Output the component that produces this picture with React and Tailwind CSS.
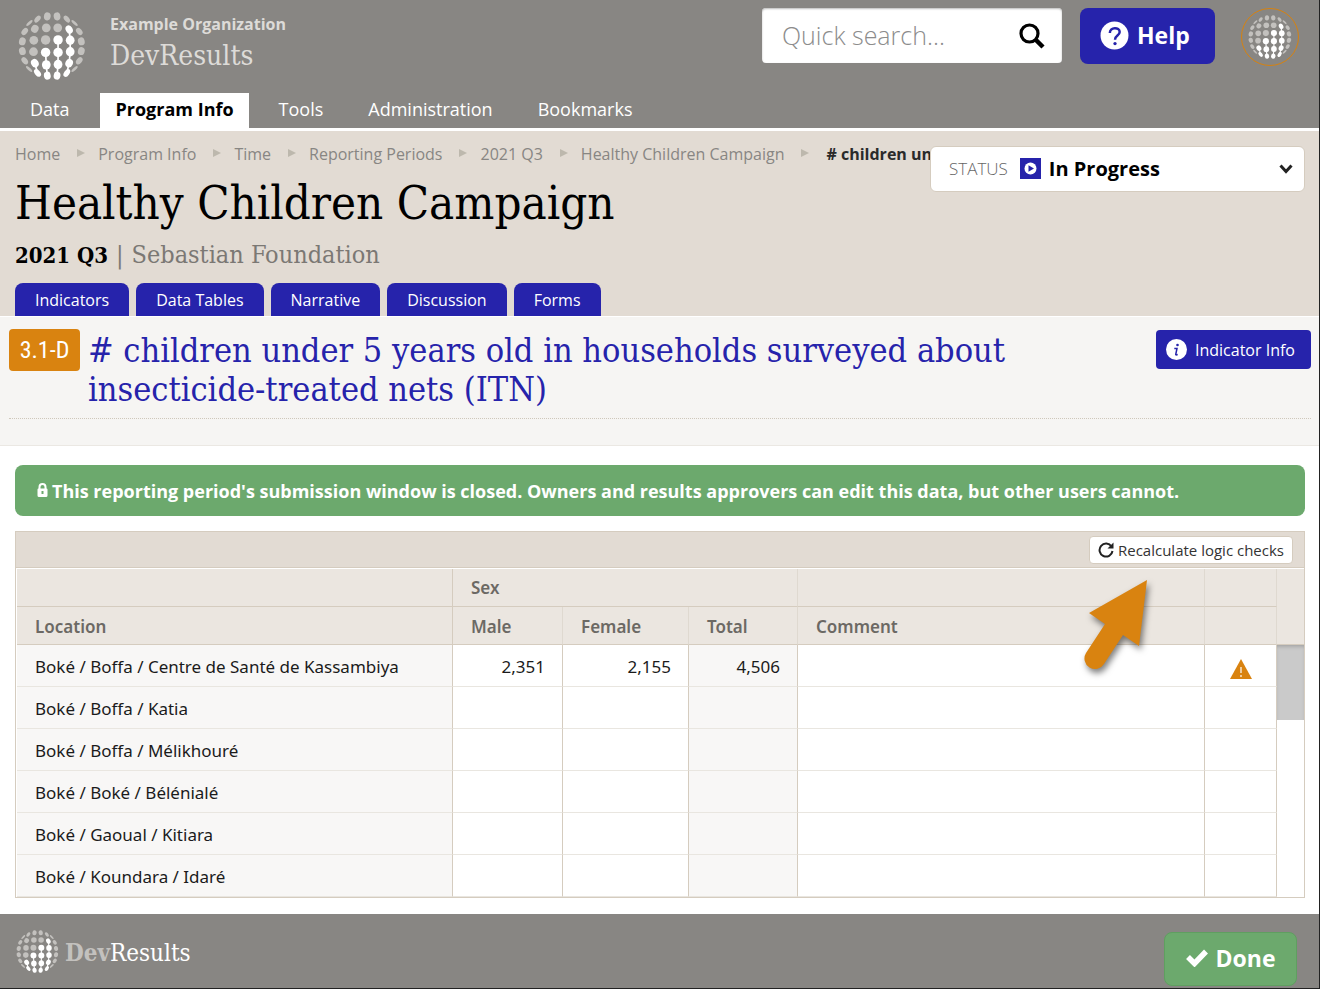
import React from "react";

// x, y, rx, ry, rotation, lit
const DOTS = [
  [141, 51, 10, 12, 8, 0], [170, 51, 10, 12, -8, 0], [112, 59, 7, 12, 40, 0], [199, 59, 7, 12, -40, 0],
  [88, 71, 4, 12, 47, 0], [222, 71, 4, 12, -47, 0],
  [74, 96, 8, 12, 40, 0], [104, 88, 11, 12, 30, 0], [138, 85, 13, 13, 0, 0], [172, 85, 13, 13, 0, 0],
  [206, 90, 10, 13, -30, 1], [236, 96, 8, 12, -40, 0],
  [67, 125, 10, 12, 15, 0], [101, 122, 13, 13, 0, 0], [136, 121, 14, 14, 0, 0], [173, 121, 14, 14, 0, 1],
  [209, 122, 13, 14, 0, 1], [242, 125, 10, 12, -15, 0],
  [67, 154, 10, 12, -15, 0], [100, 156, 13, 13, 0, 0], [136, 158, 14, 14, 0, 1], [173, 158, 14, 14, 0, 1],
  [209, 156, 13, 14, 0, 1], [242, 154, 10, 12, 15, 0],
  [74, 183, 8, 12, -40, 0], [104, 190, 11, 13, -30, 1], [138, 195, 13, 14, 0, 1], [173, 194, 13, 14, 0, 1],
  [206, 190, 11, 13, 25, 1], [236, 183, 8, 12, 40, 0],
  [87, 207, 4, 12, -47, 0], [112, 219, 8, 13, -40, 1], [141, 227, 10, 12, -10, 1], [170, 227, 10, 12, 10, 1],
  [199, 219, 8, 13, 35, 1], [222, 207, 4, 12, 47, 0],
];

function Globe({ className }) {
  return (
    <svg viewBox="54 38 202 202" className={className} aria-hidden="true">
      <path
        d="M206 90L209 122V156L206 190L199 219M173 121V194L170 227M136 158L138 195L141 227M104 190L112 219"
        fill="none"
        stroke="#fff"
        strokeWidth="5"
      />
      {DOTS.map(([x, y, rx, ry, r, lit]) => (
        <ellipse key={`${x}-${y}`} cx={x} cy={y} rx={rx} ry={ry} transform={`rotate(${r} ${x} ${y})`} fill={lit ? "#fff" : "#c3c1be"} />
      ))}
    </svg>
  );
}

const SLAB = "font-['Roboto_Slab','DejaVu_Serif_Condensed','DejaVu_Serif',serif]";
const NAV = ["Data", "Program Info", "Tools", "Administration", "Bookmarks"];
const CRUMBS = ["Home", "Program Info", "Time", "Reporting Periods", "2021 Q3", "Healthy Children Campaign"];
const TABS = ["Indicators", "Data Tables", "Narrative", "Discussion", "Forms"];
const ROWS = [
  { location: "Boké / Boffa / Centre de Santé de Kassambiya", male: "2,351", female: "2,155", total: "4,506", warn: true },
  { location: "Boké / Boffa / Katia" },
  { location: "Boké / Boffa / Mélikhouré" },
  { location: "Boké / Boké / Bélénialé" },
  { location: "Boké / Gaoual / Kitiara" },
  { location: "Boké / Koundara / Idaré" },
];

function Header() {
  return (
    <header className="border-b-3 border-white bg-[#888683]">
      <div className="flex h-[93px] items-start justify-between pt-2 pr-5 pl-[18px]">
        <div className="flex gap-6 pt-1">
          <Globe className="size-[68px]" />
          <div>
            <p className="text-base leading-6 font-bold text-[#dddbd8]">Example Organization</p>
            <p className={`${SLAB} text-[28px] leading-10 font-light text-[#dddbd8]`}>DevResults</p>
          </div>
        </div>
        <div className="flex items-start">
          <form className="flex h-[55px] w-[300px] items-center rounded bg-white pr-4 pl-5 shadow-[inset_0_1px_2px_#bbb]">
            <input aria-label="Quick search" placeholder="Quick search..." className="min-w-0 flex-1 text-[25px] font-light outline-none placeholder:text-[#8c8c8c]" />
            <button type="button" aria-label="Search">
              <svg viewBox="0 0 28 28" className="size-7" fill="none" stroke="#000">
                <circle cx="11.500" cy="11.500" r="8.500" strokeWidth="3.200" />
                <path d="M18 18l7 7" strokeWidth="4.500" />
              </svg>
            </button>
          </form>
          <button className="ml-[18px] flex h-14 w-[135px] items-center gap-2 rounded-lg bg-[#2623ab] px-5 pb-px text-[23px] font-bold text-white">
            <svg viewBox="0 0 28 28" className="size-[29px]" fill="none">
              <circle cx="14" cy="14" r="13.500" fill="#fff" />
              <path d="M9.500 11.500c0-6 9.500-6 9.500-.8 0 3.500-4.500 3.300-4.500 7.300" stroke="#2623ab" strokeWidth="2.400" />
              <circle cx="14.500" cy="21.800" r="1.600" fill="#2623ab" />
            </svg>
            Help
          </button>
          <button aria-label="Account" className="ml-[26px] flex size-[58px] items-center justify-center rounded-full border border-[#d7820f]">
            <Globe className="size-11" />
          </button>
        </div>
      </div>
      <nav className="flex h-[35px] pl-[15px] text-lg text-white">
        {NAV.map((n, i) => (
          <a
            key={n}
            href="#"
            className={
              i === 1
                ? "mr-[15px] ml-4 flex items-center bg-white px-[15px] pb-1 font-bold text-black"
                : "flex items-center px-[15px] pb-1 not-first:mr-[15px]"
            }
          >
            {n}
          </a>
        ))}
      </nav>
    </header>
  );
}

function TitleArea() {
  return (
    <section className="border-b border-white bg-[#e2dbd3] pr-[14px] pl-[15px]">
      <div className="flex items-start">
        <div className="min-w-0 flex-1 overflow-hidden pt-[11px]">
          <nav aria-label="Breadcrumb" className="flex items-center text-base leading-6 whitespace-nowrap text-[#888683]">
            {CRUMBS.map((c) => (
              <React.Fragment key={c}>
                <a href="#">{c}</a>
                <svg viewBox="0 0 38 12" className="h-3 w-[38px] shrink-0" fill="#bdb8ad">
                  <path d="M17 1l8 4-8 4z" />
                </svg>
              </React.Fragment>
            ))}
            <span className="pl-1 font-bold text-[#2a2a2a]"># children under</span>
          </nav>
          <h1 className={`${SLAB} pt-0.5 text-[47px] leading-[70px] whitespace-nowrap text-black`}>Healthy Children Campaign</h1>
        </div>
        <label className="mt-[15px] flex h-[46px] w-[375px] items-center rounded-md border border-[#d5ccbf] bg-white pr-[11px] pb-px pl-[18px] text-[17px] font-light text-[#666]">
          STATUS
          <svg viewBox="0 0 21 21" className="mr-2 ml-3 size-[21px]">
            <path d="M0 0h21v21H0z" fill="#2623ab" />
            <circle cx="10.500" cy="10.500" r="6" fill="#fff" />
            <path d="M8.500 7.200l5.500 3.300-5.500 3.300z" fill="#2623ab" />
          </svg>
          <select className="min-w-0 flex-1 appearance-none bg-transparent text-xl font-bold text-black">
            <option>In Progress</option>
          </select>
          <svg viewBox="0 0 14 14" className="size-[14px]" fill="none" stroke="#222" strokeWidth="3">
            <path d="M1.500 3.500l5.500 6 5.500-6" />
          </svg>
        </label>
      </div>
      <p className={`${SLAB} flex items-baseline gap-2 pt-px text-[25px] leading-8 text-[#7b7874]`}>
        <strong className="text-[22px] font-bold text-black">2021 Q3</strong>
        <span>|</span>
        <span>Sebastian Foundation</span>
      </p>
      <nav className="mt-3 flex gap-[7px] text-base text-white">
        {TABS.map((t) => (
          <a key={t} href="#" className="flex h-[33px] items-center rounded-t-lg bg-[#2623ab] px-5">
            {t}
          </a>
        ))}
      </nav>
    </section>
  );
}

function IndicatorArea() {
  return (
    <section className="border-b border-[#ebe8e3] bg-[#f6f5f3] pt-3 pr-2 pb-[26px] pl-[9px]">
      <div className="flex items-start justify-between border-b border-dotted border-[#cfc8bb] pb-[9px]">
        <div className="flex gap-2">
          <span className="flex h-[42px] w-[71px] shrink-0 items-center justify-center rounded bg-[#d98310] font-['Roboto_Condensed','Liberation_Sans_Narrow','Liberation_Sans',sans-serif] text-2xl text-white">
            3.1-D
          </span>
          <h2 className={`${SLAB} max-w-[960px] pt-0.5 text-[34px] leading-[39px] text-[#2623ab]`}>
            # children under 5 years old in households surveyed about insecticide-treated nets (ITN)
          </h2>
        </div>
        <button className="mt-px flex h-[39px] w-[155px] shrink-0 items-center gap-2 rounded bg-[#2623ab] px-[10px] text-base whitespace-nowrap text-white">
          <svg viewBox="0 0 21 21" className="size-[21px]">
            <circle cx="10.500" cy="10.500" r="10.500" fill="#fff" />
            <circle cx="11.500" cy="6" r="1.300" fill="#2623ab" />
            <path d="M8.300 9.500h2.700l-1.300 6q0 .8 2 0" fill="none" stroke="#2623ab" strokeWidth="1.500" />
          </svg>
          Indicator Info
        </button>
      </div>
    </section>
  );
}

const TH = "border-b border-[#d5ccbf] pl-[18px] text-left font-semibold";
const TD = "h-[42px] border-r border-b border-r-[#d5ccbf] border-b-[#e9e6e0]";

function DataTable() {
  return (
    <div className="relative mt-[15px] border border-[#d5ccbf]">
      <div className="flex h-9 items-center justify-end border-b border-[#d5ccbf] bg-[#e2dbd3] pt-px pr-[11px]">
        <button className="flex h-7 items-center gap-1 rounded border border-[#d5ccbf] bg-white px-2 text-[15px] text-[#333]">
          <svg viewBox="0 0 16 16" className="size-4" fill="none" stroke="#222" strokeWidth="2">
            <path d="M13.500 4.500A6.500 6.500 0 1 0 14.500 9" />
            <path d="M15.500.5v6h-6z" fill="#222" stroke="none" />
          </svg>
          Recalculate logic checks
        </button>
      </div>
      <div className="flex bg-white pt-px pl-px">
        <table className="min-w-0 flex-1 table-fixed border-separate border-spacing-0 font-['Segoe_UI','Noto_Sans','Open_Sans',sans-serif] text-[17px]">
          <colgroup>
            <col className="w-[436px]" />
            <col className="w-[110px]" />
            <col className="w-[126px]" />
            <col className="w-[109px]" />
            <col />
            <col className="w-[72px]" />
          </colgroup>
          <thead className="bg-[#ebe6e0] text-[#6c6964]">
            <tr className="h-[38px]">
              <th className={`${TH} border-r`} />
              <th colSpan={3} className={`${TH} border-r border-r-[#dfd9d0]`}>Sex</th>
              <th className={`${TH} border-r border-r-[#dfd9d0]`} />
              <th className={`${TH} border-r border-r-[#dfd9d0]`} />
            </tr>
            <tr className="h-[38px]">
              <th className={`${TH} border-r pt-0.5`}>Location</th>
              <th className={`${TH} border-r border-r-[#dfd9d0] pt-0.5`}>Male</th>
              <th className={`${TH} border-r border-r-[#dfd9d0] pt-0.5`}>Female</th>
              <th className={`${TH} border-r border-r-[#dfd9d0] pt-0.5`}>Total</th>
              <th className={`${TH} border-r border-r-[#dfd9d0] pt-0.5`}>Comment</th>
              <th className={`${TH} border-r border-r-[#dfd9d0]`} />
            </tr>
          </thead>
          <tbody className="text-[#1b1b1b]">
            {ROWS.map((r) => (
              <tr key={r.location}>
                <td className={`${TD} bg-[#f8f7f6] pt-0.5 pl-[18px] whitespace-nowrap`}>{r.location}</td>
                <td className={`${TD} pt-0.5 pr-[17px] text-right`}>{r.male}</td>
                <td className={`${TD} pt-0.5 pr-[17px] text-right`}>{r.female}</td>
                <td className={`${TD} bg-[#f8f7f6] pt-0.5 pr-[17px] text-right`}>{r.total}</td>
                <td className={TD} />
                <td className={`${TD} pt-[6px]`}>
                  {r.warn && (
                    <svg viewBox="0 0 22 20" className="mx-auto h-5 w-[22px]" role="img" aria-label="Warning">
                      <path d="M11 0l11 20H0z" fill="#d98310" />
                      <path d="M11 8v6m0 2v2" stroke="#fff" strokeWidth="1.200" />
                    </svg>
                  )}
                </td>
              </tr>
            ))}
          </tbody>
        </table>
        <div className="w-[27px] shrink-0">
          <div className="h-[76px] border-b border-[#d5ccbf] bg-[#ebe6e0]" />
          <div className="h-[75px] bg-[#cacaca] shadow-[inset_0_3px_4px_-2px_#999]" />
        </div>
      </div>
      <svg viewBox="0 0 80 110" className="absolute top-[42px] right-[148px] h-[110px] w-20 drop-shadow-[2px_4px_3px_rgba(0,0,0,0.5)]">
        <path d="M71 6L13 39l16 11-19 29a10 10 0 0 0 18 11l19-29 16 11z" fill="#d98310" />
      </svg>
    </div>
  );
}

export default function App() {
  return (
    <div className="flex min-h-screen flex-col border-r border-b border-[#222] bg-white font-['Open_Sans',sans-serif]">
      <Header />
      <TitleArea />
      <IndicatorArea />
      <main className="flex-1 pt-[19px] pr-[14px] pb-4 pl-[15px]">
        <div className="flex h-[51px] items-center gap-1 rounded-lg bg-[#6ca96d] px-[22px] text-lg font-bold text-white">
          <svg viewBox="0 0 11 15" className="h-[15px] w-[11px]">
            <path d="M2.500 6V4a3 3 0 0 1 6 0v2" fill="none" stroke="#fff" strokeWidth="2" />
            <path fillRule="evenodd" d="M1.500 5.500h8q1 0 1 1v6q0 1.500-1.500 1.500H2Q.5 14 .5 12.500v-6q0-1 1-1zM4.500 8v3h2V8z" fill="#fff" />
          </svg>
          This reporting period's submission window is closed. Owners and results approvers can edit this data, but other users cannot.
        </div>
        <DataTable />
      </main>
      <footer className="flex h-[74px] items-start justify-between bg-[#888683] pr-[22px] pl-4">
        <div className="mt-4 flex items-center gap-[6px]">
          <Globe className="size-[43px]" />
          <span className={`${SLAB} pt-0.5 text-2xl font-bold text-[#c3c1be]`}>
            Dev<span className="font-normal text-white">Results</span>
          </span>
        </div>
        <button className="mt-[18px] flex h-[54px] w-[133px] items-center justify-center gap-2 rounded-lg border border-[#5f9f60] bg-[#6ca96d] pb-0.5 text-[23px] font-bold text-white">
          <svg viewBox="0 0 22 18" className="h-[18px] w-[22px]" fill="none" stroke="#fff" strokeWidth="5.500">
            <path d="M2 8l6.500 6.500L20 2.500" />
          </svg>
          Done
        </button>
      </footer>
    </div>
  );
}
